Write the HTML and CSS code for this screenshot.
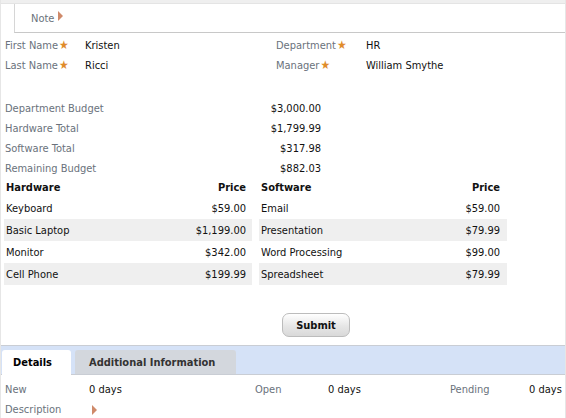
FILE: index.html
```html
<!DOCTYPE html>
<html>
<head>
<meta charset="utf-8">
<link rel="stylesheet" href="styles.css">
</head>
<body>
<div class="page">
  <div class="topstrip"></div>
  <div class="note">
    <span class="label">Note</span>
    <span class="tri"></span>
  </div>
  <div class="fields">
    <div class="label">First Name<span class="star">&#9733;</span></div>
    <div class="value">Kristen</div>
    <div class="label">Department<span class="star">&#9733;</span></div>
    <div class="value">HR</div>
    <div class="label">Last Name<span class="star">&#9733;</span></div>
    <div class="value">Ricci</div>
    <div class="label">Manager<span class="star">&#9733;</span></div>
    <div class="value">William Smythe</div>
  </div>
  <div class="budget">
    <div class="label">Department Budget</div><div class="amount">$3,000.00</div>
    <div class="label">Hardware Total</div><div class="amount">$1,799.99</div>
    <div class="label">Software Total</div><div class="amount">$317.98</div>
    <div class="label">Remaining Budget</div><div class="amount">$882.03</div>
  </div>
  <div class="tables">
    <table class="items">
      <thead><tr><th class="name">Hardware</th><th class="price">Price</th></tr></thead>
      <tbody>
        <tr><td class="name">Keyboard</td><td class="price">$59.00</td></tr>
        <tr class="alt"><td class="name">Basic Laptop</td><td class="price">$1,199.00</td></tr>
        <tr><td class="name">Monitor</td><td class="price">$342.00</td></tr>
        <tr class="alt"><td class="name">Cell Phone</td><td class="price">$199.99</td></tr>
      </tbody>
    </table>
    <table class="items sw">
      <thead><tr><th class="name">Software</th><th class="price">Price</th></tr></thead>
      <tbody>
        <tr><td class="name">Email</td><td class="price">$59.00</td></tr>
        <tr class="alt"><td class="name">Presentation</td><td class="price">$79.99</td></tr>
        <tr><td class="name">Word Processing</td><td class="price">$99.00</td></tr>
        <tr class="alt"><td class="name">Spreadsheet</td><td class="price">$79.99</td></tr>
      </tbody>
    </table>
  </div>
  <div class="actions">
    <button class="submit">Submit</button>
  </div>
  <div class="tabbar">
    <div class="tab active">Details</div>
    <div class="tab">Additional Information</div>
  </div>
  <div class="details">
    <div class="label">New</div><div class="value">0 days</div>
    <div class="label">Open</div><div class="value">0 days</div>
    <div class="label">Pending</div><div class="value">0 days</div>
    <div class="label">Description</div><div class="value"><span class="tri"></span></div>
  </div>
</div>
</body>
</html>
```

FILE: styles.css
```css
html, body {
  margin: 0;
  padding: 0;
  background: #fff;
}
body {
  font-family: "DejaVu Sans Condensed", "DejaVu Sans", sans-serif;
  font-size: 11px;
  color: #111;
}
.page {
  width: 566px;
  height: 418px;
  box-sizing: border-box;
  border-left: 1px solid #e6e6e6;
  border-right: 1px solid #e6e6e6;
  overflow: hidden;
}
.topstrip {
  height: 3px;
  background: #efefef;
  border-bottom: 1px solid #e4e4e4;
}
.label {
  color: #6a727c;
}
.value {
  color: #111;
}
.note {
  margin-left: 13px;
  height: 28px;
  border-left: 1px solid #d6d6d6;
  border-bottom: 1px solid #c8c8c8;
  display: flex;
  align-items: center;
  padding-left: 16px;
  gap: 4px;
}
.tri {
  display: inline-block;
  width: 0;
  height: 0;
  border-top: 5px solid transparent;
  border-bottom: 5px solid transparent;
  border-left: 5px solid #cf8a6a;
  vertical-align: middle;
}
.note .tri {
  margin-top: -4px;
}
.star {
  color: #e08c2a;
  font-size: 12px;
  margin-left: 1px;
}
.fields {
  display: grid;
  grid-template-columns: 80px 191px 90px 1fr;
  grid-auto-rows: 20px;
  align-items: center;
  padding: 2px 0 0 4px;
}
.budget {
  display: grid;
  grid-template-columns: 200px 116px;
  grid-auto-rows: 20px;
  align-items: center;
  padding: 23px 0 0 4px;
}
.amount {
  text-align: right;
  color: #111;
}
.tables {
  display: flex;
  gap: 7px;
  padding-left: 3px;
  margin-top: -1px;
}
.items {
  width: 248px;
  border-collapse: collapse;
}
.items th, .items td {
  padding: 0 6px 0 2px;
}
.items.sw th, .items.sw td {
  padding-right: 7px;
}
.items th {
  height: 20px;
  font-weight: bold;
  color: #111;
  text-align: left;
}
.items th.price, .items td.price {
  text-align: right;
}
.items td {
  height: 22px;
}
.items tr.alt td {
  background: #efefef;
}
.actions {
  padding: 28px 0 0 281px;
  height: 32px;
}
.submit {
  width: 68px;
  height: 24px;
  border: 1px solid #bcbcbc;
  border-radius: 7px;
  background: linear-gradient(#ffffff, #e6e6e6 55%, #d9d9d9);
  font-family: inherit;
  font-size: 11px;
  font-weight: bold;
  color: #111;
  padding: 0;
}
.tabbar {
  display: flex;
  align-items: flex-end;
  gap: 4px;
  height: 28px;
  background: #d5e2f7;
  border-top: 1px solid #c9cdd4;
  border-bottom: 1px solid #c9cdd4;
  padding-left: 1px;
}
.tab {
  height: 24px;
  display: flex;
  align-items: center;
  padding: 0 21px 0 14px;
  font-weight: bold;
  color: #333;
  background: #d3d7dd;
  border-radius: 3px 3px 0 0;
}
.tab.active {
  background: #fff;
  color: #000;
  height: 25px;
  margin-bottom: -1px;
  padding: 0 19px 0 11px;
}
.details {
  display: grid;
  grid-template-columns: 84px 166px 73px 122px 79px 1fr;
  grid-auto-rows: 20px;
  align-items: center;
  padding: 4px 0 0 4px;
}
.details .tri {
  margin-left: 3px;
}
```
